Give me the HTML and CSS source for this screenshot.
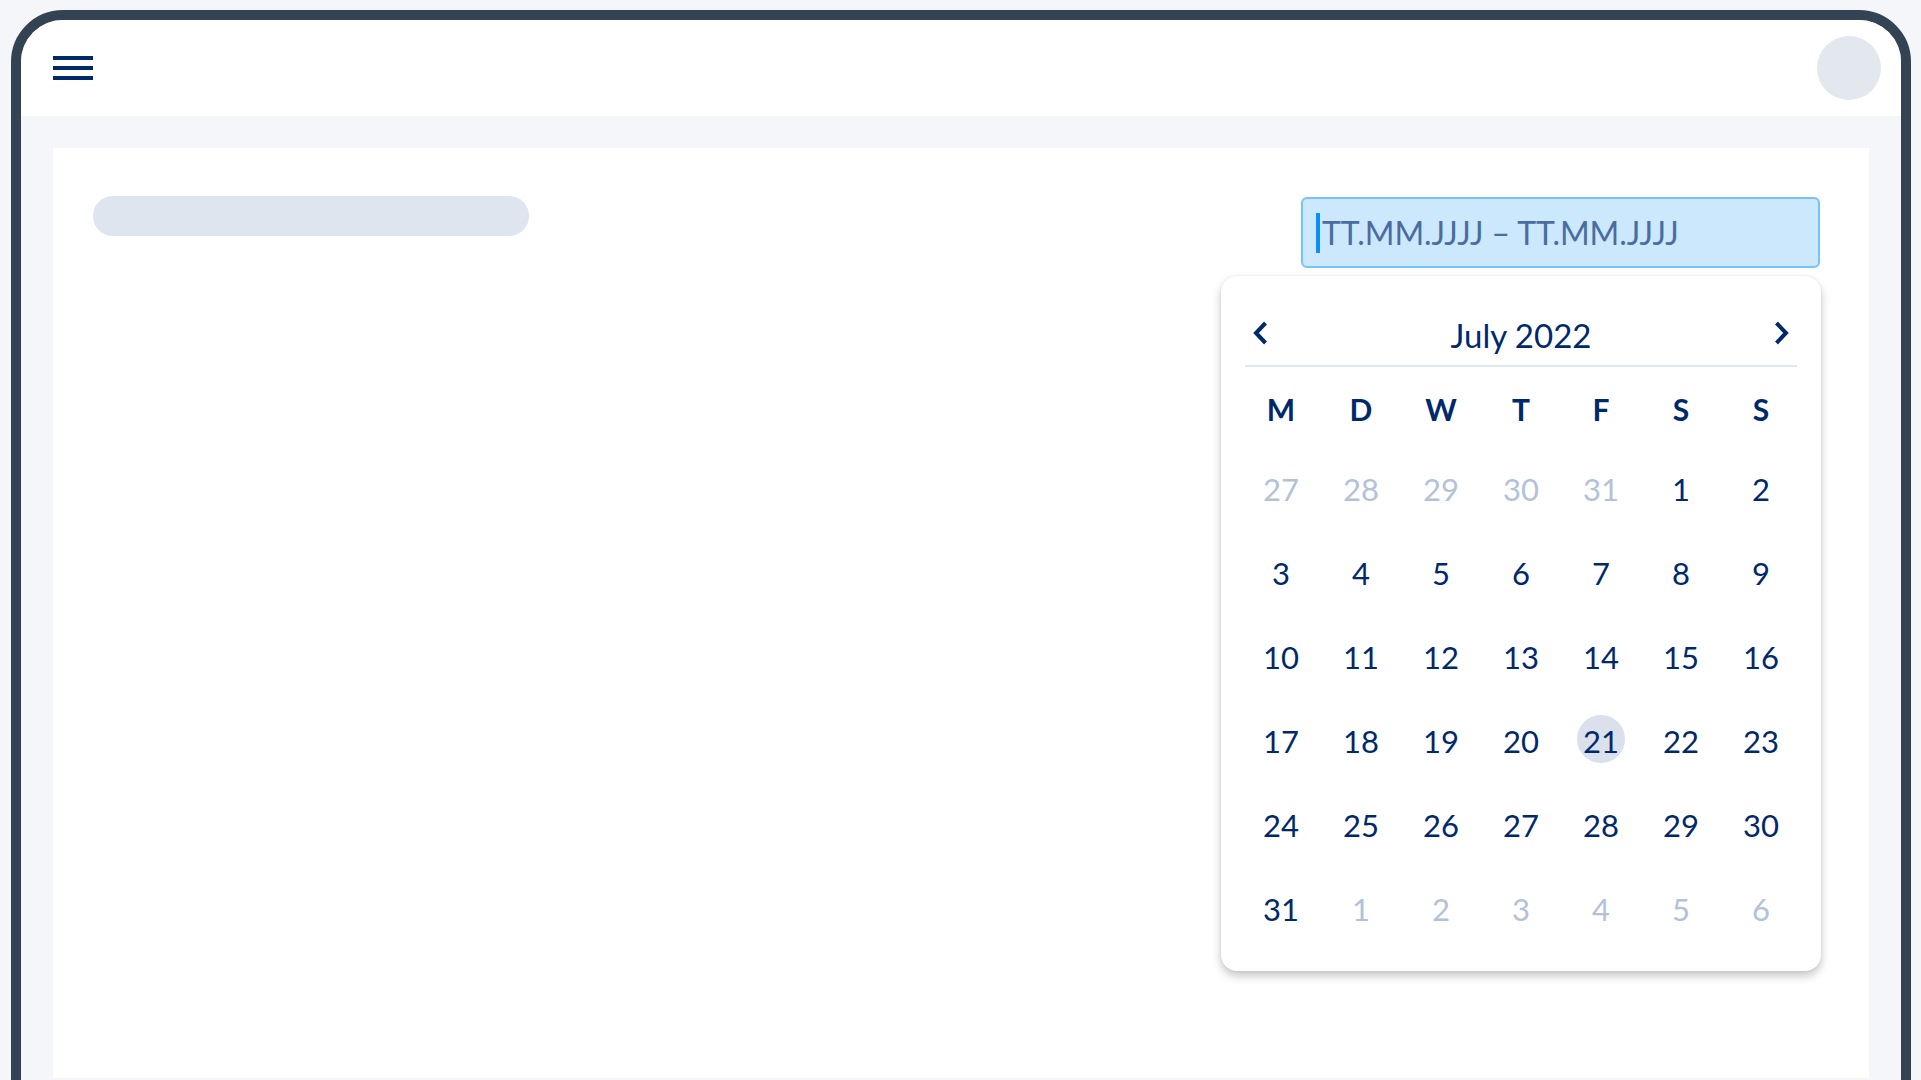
FILE: index.html
```html
<!DOCTYPE html>
<html lang="de">
<head>
    <meta charset="UTF-8">
    <meta name="viewport" content="width=device-width, initial-scale=1.0">
    <title>Zeitraum</title>
    <link rel="stylesheet" href="styles.css">
</head>
<body>
    <div class="frame">
        <div class="topbar">
            <button class="menu-btn" aria-label="Menü">
                <span></span><span></span><span></span>
            </button>
            <div class="avatar"></div>
        </div>
        <div class="main">
            <div class="card">
                <div class="card-head">
                    <div class="title-skeleton"></div>
                    <div class="range-field">
                        <div class="range-input">
                            <span class="caret"></span>
                            <span class="placeholder">TT.MM.JJJJ – TT.MM.JJJJ</span>
                        </div>
                        <div class="picker">
                            <div class="picker-head">
                                <button class="nav-btn" aria-label="Vorheriger Monat">
                                    <svg width="16" height="24" viewBox="0 0 16 24"><polyline points="13.5,2 4,12 13.5,22" fill="none" stroke="currentColor" stroke-width="4"/></svg>
                                </button>
                                <span class="month">July 2022</span>
                                <button class="nav-btn" aria-label="Nächster Monat">
                                    <svg width="16" height="24" viewBox="0 0 16 24"><polyline points="2.5,2 12,12 2.5,22" fill="none" stroke="currentColor" stroke-width="4"/></svg>
                                </button>
                            </div>
                            <div class="weekdays">
                                <span>M</span><span>D</span><span>W</span><span>T</span><span>F</span><span>S</span><span>S</span>
                            </div>
                            <div class="days" id="days"></div>
                        </div>
                    </div>
                </div>
            </div>
        </div>
    </div>

    <script>
        // Tage für Juli 2022 aufbauen (Woche beginnt am Montag)
        var days = document.getElementById("days");
        var today = 21;
        var cells = [];
        [27, 28, 29, 30, 31].forEach(function(d) { cells.push({ n: d, other: true }); });
        for (var i = 1; i <= 31; i++) {
            cells.push({ n: i, other: false });
        }
        for (var j = 1; j <= 6; j++) {
            cells.push({ n: j, other: true });
        }
        cells.forEach(function(c) {
            var cell = document.createElement("span");
            cell.className = "day";
            if (c.other) cell.className += " other";
            if (!c.other && c.n === today) cell.className += " today";
            cell.textContent = c.n;
            days.appendChild(cell);
        });
    </script>
</body>
</html>
```

FILE: styles.css
```css
html, body {
    margin: 0;
    padding: 0;
    height: 100%;
    overflow: hidden;
}
body {
    background-color: #f4f6fa;
    font-family: Lato, "Noto Sans", sans-serif;
    color: #00296b;
    padding: 10px 10px 0 11px;
    box-sizing: border-box;
}
.frame {
    border: 10px solid #334354;
    border-radius: 52px 52px 0 0;
    overflow: hidden;
    background-color: #f4f6fa;
}
.topbar {
    height: 96px;
    background-color: #fff;
    display: flex;
    align-items: center;
    justify-content: space-between;
    padding: 0 20px 0 32px;
}
.menu-btn {
    display: flex;
    flex-direction: column;
    gap: 6px;
    padding: 0;
    border: none;
    background: none;
    cursor: pointer;
}
.menu-btn span {
    display: block;
    width: 40px;
    height: 4px;
    background-color: #00296b;
}
.avatar {
    width: 64px;
    height: 64px;
    border-radius: 50%;
    background-color: #e3e8ef;
}
.main {
    padding: 32px;
}
.card {
    background-color: #fff;
    min-height: 930px;
    padding: 48px 49px 0 40px;
    box-sizing: border-box;
}
.card-head {
    display: flex;
    justify-content: space-between;
    align-items: flex-start;
}
.title-skeleton {
    width: 436px;
    height: 40px;
    border-radius: 20px;
    background-color: #dee5ee;
}
.range-field {
    position: relative;
    width: 519px;
}
.range-input {
    height: 71px;
    box-sizing: border-box;
    border: 2px solid #76c2fb;
    border-radius: 6px;
    background-color: #cce8fd;
    display: flex;
    align-items: center;
    padding-left: 13px;
    margin-top: 1px;
}
.caret {
    width: 4px;
    height: 40px;
    background-color: #0a8ff7;
    margin-right: 2px;
}
.placeholder {
    font-size: 32px;
    color: #4a6c9f;
    letter-spacing: -0.1px;
}
.picker {
    position: absolute;
    top: 80px;
    right: -1px;
    width: 600px;
    box-sizing: border-box;
    padding: 20px;
    background-color: #fff;
    border-radius: 16px;
    box-shadow: 0 5px 10px rgba(0, 0, 0, 0.22), 0 0 3px rgba(0, 0, 0, 0.08);
    z-index: 2;
}
.picker-head {
    height: 71px;
    box-sizing: border-box;
    margin: 0 4px;
    border-bottom: 2px solid #dfe7f0;
    display: flex;
    align-items: center;
    justify-content: space-between;
    padding: 4px 7px 0 7px;
}
.nav-btn {
    border: none;
    background: none;
    padding: 0;
    color: #00296b;
    display: flex;
    cursor: pointer;
}
.month {
    font-size: 33px;
    color: #00296b;
    padding-top: 4px;
}
.weekdays,
.days {
    display: grid;
    grid-template-columns: repeat(7, 80px);
}
.weekdays {
    margin-top: 4px;
}
.weekdays span {
    height: 76px;
    display: flex;
    align-items: center;
    justify-content: center;
    font-size: 30px;
    font-weight: 700;
}
.day {
    height: 84px;
    display: flex;
    align-items: center;
    justify-content: center;
    font-size: 31px;
    color: #00296b;
    position: relative;
    z-index: 0;
}
.day.other {
    color: #b3c2d6;
}
/* runder Hintergrund für den heutigen Tag */
.day.today::before {
    content: "";
    position: absolute;
    width: 48px;
    height: 48px;
    border-radius: 50%;
    background-color: #dae1ec;
    left: 16px;
    top: 16px;
    z-index: -1;
}
```
